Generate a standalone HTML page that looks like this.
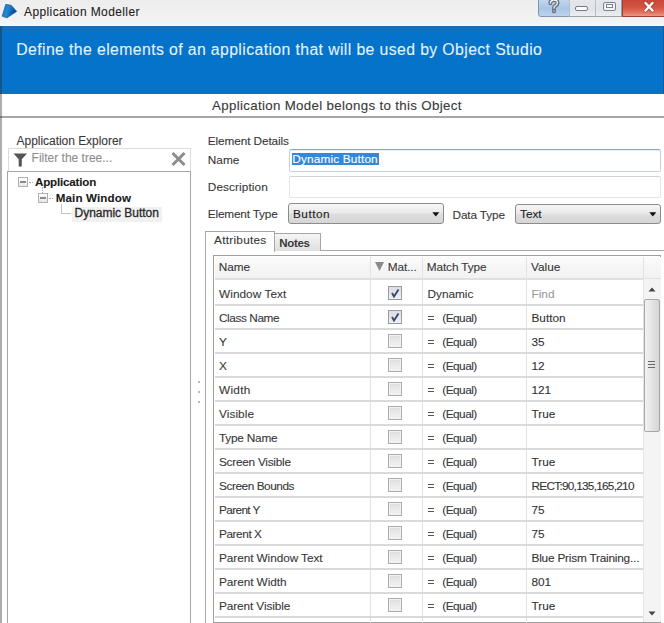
<!DOCTYPE html>
<html><head><meta charset="utf-8">
<style>
*{margin:0;padding:0;box-sizing:border-box}
html,body{width:664px;height:623px;overflow:hidden;background:#fff}
body{position:relative;font-family:"Liberation Sans",sans-serif;font-size:11.8px;color:#333}
.a{position:absolute}
.t{position:absolute;white-space:nowrap;line-height:1;font-family:"Liberation Sans",sans-serif;-webkit-text-stroke:0.1px currentColor}
</style></head><body>
<div class="a" style="left:0;top:0;width:664px;height:26px;background:linear-gradient(#ededed,#f1f1f1 60%,#f3f3f3 86%,#eef7ff 92%,#f4faff)"></div>
<svg class="a" style="left:0;top:0" width="20" height="22" viewBox="0 0 20 22"><defs><linearGradient id="ig" x1="0" y1="0" x2="1" y2="0.3"><stop offset="0" stop-color="#1a6fc0"/><stop offset="0.45" stop-color="#1f8ad8"/><stop offset="1" stop-color="#0b3f86"/></linearGradient></defs><path d="M5.8 4.4 L11.2 5.3 L16.6 11.4 L7 17.8 L2.2 16.2 Z" fill="url(#ig)" stroke="#1a5fa8" stroke-width="0.8" stroke-linejoin="round"/></svg>
<div class="a" style="left:537.5px;top:-2px;width:32.5px;height:18.5px;border:1px solid #8096ae;border-radius:0 0 0 3px;background:linear-gradient(#c4d8ee,#a9c6e6 55%,#bcd3ec)"></div>
<svg class="a" style="left:546px;top:-1px" width="16" height="16" viewBox="0 0 16 16"><path d="M4.3 4.2 Q4.6 1 8 1 Q11.6 1 11.4 4 Q11.2 6 8.8 7.2 Q8 7.7 8 9.2" stroke="#66707b" stroke-width="4" fill="none" stroke-linecap="round"/><circle cx="8" cy="12" r="2.2" fill="#66707b"/><path d="M4.3 4.2 Q4.6 1 8 1 Q11.6 1 11.4 4 Q11.2 6 8.8 7.2 Q8 7.7 8 9.2" stroke="#f4f7fb" stroke-width="1.3" fill="none" stroke-linecap="round"/><circle cx="8" cy="12" r="0.7" fill="#f4f7fb"/></svg>
<div class="a" style="left:569px;top:-2px;width:27px;height:18.5px;border:1px solid #98a2ad;border-left:1px solid #b8bec6;background:linear-gradient(#e6e8ec,#dfe2e7 55%,#eceef1)"></div>
<div class="a" style="left:574.5px;top:6.3px;width:13px;height:5px;border:1.4px solid #747c85;border-radius:2px;background:#fbfbfb"></div>
<div class="a" style="left:595px;top:-2px;width:27px;height:18.5px;border:1px solid #98a2ad;border-left:1px solid #b8bec6;background:linear-gradient(#e6e8ec,#dfe2e7 55%,#eceef1)"></div>
<div class="a" style="left:602.5px;top:1.5px;width:13px;height:9px;border:1.5px solid #7a838c;border-radius:2px;background:#f4f4f4"></div>
<div class="a" style="left:605.5px;top:4px;width:7px;height:4px;border:1px solid #7a838c;background:#fff"></div>
<div class="a" style="left:622px;top:-2px;width:44px;height:18.5px;border:1px solid #9c4036;background:linear-gradient(#c8473a,#d4513f 45%,#e2745f 80%,#e99a88)"></div>
<svg class="a" style="left:642px;top:1px" width="14" height="12" viewBox="0 0 14 12"><path d="M3.5 2 L10.5 9.5 M10.5 2 L3.5 9.5" stroke="#8a3a30" stroke-width="4" stroke-linecap="round" opacity="0.6"/><path d="M3.5 2 L10.5 9.5 M10.5 2 L3.5 9.5" stroke="#fff" stroke-width="2.4" stroke-linecap="round"/></svg>
<div class="a" style="left:0;top:26px;width:664px;height:67.5px;background:linear-gradient(#2a6aa6,#1a6cbc 1.5px,#0673cb 3px,#0673cb)"></div>
<div class="a" style="left:0;top:116.3px;width:664px;height:1.8px;background:#a6a6a6"></div>
<div class="a" style="left:0;top:26px;width:1.8px;height:597px;background:rgba(40,40,40,0.38)"></div>
<div class="a" style="left:662.5px;top:26px;width:1.5px;height:67.5px;background:rgba(0,30,60,0.25)"></div>
<div class="a" style="left:8px;top:148px;width:183px;height:24px;border:1px solid #dcdcdc;border-bottom:none"></div>
<svg class="a" style="left:12.5px;top:152.5px" width="15" height="14" viewBox="0 0 15 14"><path d="M0.5 0.5 H14 L8.8 6.2 V13.3 Q7.25 14 5.7 13.3 V6.2 Z" fill="#555"/></svg>
<svg class="a" style="left:170px;top:151px" width="17" height="16" viewBox="0 0 17 16"><path d="M2.5 2 L14.5 14 M14.5 2 L2.5 14" stroke="#8c8c8c" stroke-width="3"/></svg>
<div class="a" style="left:7.3px;top:171px;width:184px;height:460px;border:1.5px solid #a6a6a6"></div>
<div class="a" style="left:18px;top:177px;width:10px;height:10px;border:1px solid #b0b0b0;background:linear-gradient(#fff,#e8e8e8)"></div>
<div class="a" style="left:20px;top:181.3px;width:6px;height:1.4px;background:#8a8a8a"></div>
<div class="a" style="left:29px;top:181.5px;width:4px;border-top:1px dotted #aaa"></div>
<div class="a" style="left:42px;top:187px;height:6px;border-left:1px dotted #aaa"></div>
<div class="a" style="left:38px;top:193px;width:10px;height:10px;border:1px solid #b0b0b0;background:linear-gradient(#fff,#e8e8e8)"></div>
<div class="a" style="left:40px;top:197.3px;width:6px;height:1.4px;background:#8a8a8a"></div>
<div class="a" style="left:49px;top:197.5px;width:4px;border-top:1px dotted #aaa"></div>
<div class="a" style="left:61px;top:204px;width:10px;height:10px;border-left:1px solid #c4c4c4;border-bottom:1px solid #c4c4c4"></div>
<div class="a" style="left:71.5px;top:206.5px;width:90px;height:15px;background:#f1f1f1"></div>
<div class="a" style="left:198px;top:381px;width:2px;height:2px;border-radius:1px;background:#a4a4a4"></div>
<div class="a" style="left:198px;top:391px;width:2px;height:2px;border-radius:1px;background:#a4a4a4"></div>
<div class="a" style="left:198px;top:401px;width:2px;height:2px;border-radius:1px;background:#a4a4a4"></div>
<div class="a" style="left:289px;top:149px;width:372px;height:23px;border:1px solid #c4d2dc;border-top-color:#94a6b2;border-radius:2px;background:#fff;box-shadow:inset 0 1px 0 #e2f1f8"></div>
<div class="a" style="left:291.5px;top:152.5px;width:87px;height:12.5px;background:#3189dc"></div>
<div class="a" style="left:289px;top:176px;width:371.5px;height:22px;border:1px solid #e2e4e6;border-top-color:#d0d3d6;border-radius:2px;background:#fff"></div>
<div class="a" style="left:288px;top:203px;width:156px;height:21px;border:1px solid #8c8c8c;border-radius:3px;background:linear-gradient(#f6f6f6,#e9e9e9 45%,#dddddd 55%,#d6d6d6)"></div>
<svg class="a" style="left:432px;top:212px" width="8" height="5" viewBox="0 0 8 5"><path d="M0.3 0.3 H7.3 L3.8 4.5Z" fill="#111"/></svg>
<div class="a" style="left:515px;top:203.5px;width:146px;height:20.5px;border:1px solid #8c8c8c;border-radius:3px;background:linear-gradient(#f6f6f6,#e9e9e9 45%,#dddddd 55%,#d6d6d6)"></div>
<svg class="a" style="left:649px;top:212.2px" width="8" height="5" viewBox="0 0 8 5"><path d="M0.3 0.3 H7.3 L3.8 4.5Z" fill="#111"/></svg>
<div class="a" style="left:205px;top:250px;width:470px;height:400px;border:1.5px solid #a6a6a6"></div>
<div class="a" style="left:274px;top:233px;width:47px;height:18px;border:1px solid #a6a6a6;border-bottom:none;background:linear-gradient(#f6f6f6,#dedede)"></div>
<div class="a" style="left:205px;top:231px;width:70px;height:21px;border:1.5px solid #a6a6a6;border-bottom:none;background:#fff"></div>
<div class="a" style="left:213px;top:255px;width:448px;height:368px;border:1.5px solid #a0a0a0;background:#fff"></div>
<div class="a" style="left:214.5px;top:256.5px;width:446px;height:22.5px;background:linear-gradient(#fbfbfb,#f1f1f1)"></div>
<div class="a" style="left:214.5px;top:278px;width:446px;height:2px;background:#e0e0e0"></div>
<svg class="a" style="left:374.5px;top:262px" width="9" height="9" viewBox="0 0 9 9"><path d="M0 0 H9 L4.5 9Z" fill="#8a8a8a"/></svg>
<div class="a" style="left:370px;top:256.5px;width:1px;height:366px;background:#e2e2e2"></div>
<div class="a" style="left:421.5px;top:256.5px;width:1px;height:366px;background:#e2e2e2"></div>
<div class="a" style="left:526px;top:256.5px;width:1px;height:366px;background:#e2e2e2"></div>
<div class="a" style="left:643px;top:256.5px;width:1px;height:22px;background:#e2e2e2"></div>
<div class="a" style="left:214.5px;top:303.8px;width:429px;height:2px;background:#dadada"></div>
<div class="a" style="left:214.5px;top:327.8px;width:429px;height:2px;background:#dadada"></div>
<div class="a" style="left:214.5px;top:351.8px;width:429px;height:2px;background:#dadada"></div>
<div class="a" style="left:214.5px;top:375.8px;width:429px;height:2px;background:#dadada"></div>
<div class="a" style="left:214.5px;top:399.8px;width:429px;height:2px;background:#dadada"></div>
<div class="a" style="left:214.5px;top:423.8px;width:429px;height:2px;background:#dadada"></div>
<div class="a" style="left:214.5px;top:447.8px;width:429px;height:2px;background:#dadada"></div>
<div class="a" style="left:214.5px;top:471.8px;width:429px;height:2px;background:#dadada"></div>
<div class="a" style="left:214.5px;top:495.8px;width:429px;height:2px;background:#dadada"></div>
<div class="a" style="left:214.5px;top:519.8px;width:429px;height:2px;background:#dadada"></div>
<div class="a" style="left:214.5px;top:543.8px;width:429px;height:2px;background:#dadada"></div>
<div class="a" style="left:214.5px;top:567.8px;width:429px;height:2px;background:#dadada"></div>
<div class="a" style="left:214.5px;top:591.8px;width:429px;height:2px;background:#dadada"></div>
<div class="a" style="left:214.5px;top:615.8px;width:429px;height:2px;background:#dadada"></div>
<div class="a" style="left:388px;top:286px;width:14px;height:14px;border:1px solid #9c9c9c;background:linear-gradient(#dadde4,#eef0f4)"></div>
<svg class="a" style="left:388px;top:286px" width="14" height="14" viewBox="0 0 14 14"><path d="M4 7 L6 10.5 L10.5 3.5" stroke="#34446e" stroke-width="1.8" fill="none"/></svg>
<div class="a" style="left:388px;top:310px;width:14px;height:14px;border:1px solid #9c9c9c;background:linear-gradient(#dadde4,#eef0f4)"></div>
<svg class="a" style="left:388px;top:310px" width="14" height="14" viewBox="0 0 14 14"><path d="M4 7 L6 10.5 L10.5 3.5" stroke="#34446e" stroke-width="1.8" fill="none"/></svg>
<div class="a" style="left:428px;top:316.0px;width:5.5px;height:1.4px;background:#555"></div>
<div class="a" style="left:428px;top:318.6px;width:5.5px;height:1.4px;background:#555"></div>
<div class="a" style="left:388px;top:334px;width:14px;height:14px;border:1px solid #adadad;background:linear-gradient(#dedede,#f4f4f4);box-shadow:inset 0 0 0 1px #f2f2f2"></div>
<div class="a" style="left:428px;top:340.0px;width:5.5px;height:1.4px;background:#555"></div>
<div class="a" style="left:428px;top:342.6px;width:5.5px;height:1.4px;background:#555"></div>
<div class="a" style="left:388px;top:358px;width:14px;height:14px;border:1px solid #adadad;background:linear-gradient(#dedede,#f4f4f4);box-shadow:inset 0 0 0 1px #f2f2f2"></div>
<div class="a" style="left:428px;top:364.0px;width:5.5px;height:1.4px;background:#555"></div>
<div class="a" style="left:428px;top:366.6px;width:5.5px;height:1.4px;background:#555"></div>
<div class="a" style="left:388px;top:382px;width:14px;height:14px;border:1px solid #adadad;background:linear-gradient(#dedede,#f4f4f4);box-shadow:inset 0 0 0 1px #f2f2f2"></div>
<div class="a" style="left:428px;top:388.0px;width:5.5px;height:1.4px;background:#555"></div>
<div class="a" style="left:428px;top:390.6px;width:5.5px;height:1.4px;background:#555"></div>
<div class="a" style="left:388px;top:406px;width:14px;height:14px;border:1px solid #adadad;background:linear-gradient(#dedede,#f4f4f4);box-shadow:inset 0 0 0 1px #f2f2f2"></div>
<div class="a" style="left:428px;top:412.0px;width:5.5px;height:1.4px;background:#555"></div>
<div class="a" style="left:428px;top:414.6px;width:5.5px;height:1.4px;background:#555"></div>
<div class="a" style="left:388px;top:430px;width:14px;height:14px;border:1px solid #adadad;background:linear-gradient(#dedede,#f4f4f4);box-shadow:inset 0 0 0 1px #f2f2f2"></div>
<div class="a" style="left:428px;top:436.0px;width:5.5px;height:1.4px;background:#555"></div>
<div class="a" style="left:428px;top:438.6px;width:5.5px;height:1.4px;background:#555"></div>
<div class="a" style="left:388px;top:454px;width:14px;height:14px;border:1px solid #adadad;background:linear-gradient(#dedede,#f4f4f4);box-shadow:inset 0 0 0 1px #f2f2f2"></div>
<div class="a" style="left:428px;top:460.0px;width:5.5px;height:1.4px;background:#555"></div>
<div class="a" style="left:428px;top:462.6px;width:5.5px;height:1.4px;background:#555"></div>
<div class="a" style="left:388px;top:478px;width:14px;height:14px;border:1px solid #adadad;background:linear-gradient(#dedede,#f4f4f4);box-shadow:inset 0 0 0 1px #f2f2f2"></div>
<div class="a" style="left:428px;top:484.0px;width:5.5px;height:1.4px;background:#555"></div>
<div class="a" style="left:428px;top:486.6px;width:5.5px;height:1.4px;background:#555"></div>
<div class="a" style="left:388px;top:502px;width:14px;height:14px;border:1px solid #adadad;background:linear-gradient(#dedede,#f4f4f4);box-shadow:inset 0 0 0 1px #f2f2f2"></div>
<div class="a" style="left:428px;top:508.0px;width:5.5px;height:1.4px;background:#555"></div>
<div class="a" style="left:428px;top:510.6px;width:5.5px;height:1.4px;background:#555"></div>
<div class="a" style="left:388px;top:526px;width:14px;height:14px;border:1px solid #adadad;background:linear-gradient(#dedede,#f4f4f4);box-shadow:inset 0 0 0 1px #f2f2f2"></div>
<div class="a" style="left:428px;top:532.0px;width:5.5px;height:1.4px;background:#555"></div>
<div class="a" style="left:428px;top:534.6px;width:5.5px;height:1.4px;background:#555"></div>
<div class="a" style="left:388px;top:550px;width:14px;height:14px;border:1px solid #adadad;background:linear-gradient(#dedede,#f4f4f4);box-shadow:inset 0 0 0 1px #f2f2f2"></div>
<div class="a" style="left:428px;top:556.0px;width:5.5px;height:1.4px;background:#555"></div>
<div class="a" style="left:428px;top:558.6px;width:5.5px;height:1.4px;background:#555"></div>
<div class="a" style="left:388px;top:574px;width:14px;height:14px;border:1px solid #adadad;background:linear-gradient(#dedede,#f4f4f4);box-shadow:inset 0 0 0 1px #f2f2f2"></div>
<div class="a" style="left:428px;top:580.0px;width:5.5px;height:1.4px;background:#555"></div>
<div class="a" style="left:428px;top:582.6px;width:5.5px;height:1.4px;background:#555"></div>
<div class="a" style="left:388px;top:598px;width:14px;height:14px;border:1px solid #adadad;background:linear-gradient(#dedede,#f4f4f4);box-shadow:inset 0 0 0 1px #f2f2f2"></div>
<div class="a" style="left:428px;top:604.0px;width:5.5px;height:1.4px;background:#555"></div>
<div class="a" style="left:428px;top:606.6px;width:5.5px;height:1.4px;background:#555"></div>
<div class="a" style="left:643px;top:279px;width:17.5px;height:343px;background:#f4f4f4;border-left:1px solid #e4e4e4"></div>
<svg class="a" style="left:648px;top:287px" width="8" height="5" viewBox="0 0 8 5"><path d="M0.5 4.5 L4 0.5 L7.5 4.5Z" fill="#444"/></svg>
<div class="a" style="left:644px;top:299px;width:16px;height:133px;border:1px solid #a8a8a8;border-radius:2px;background:linear-gradient(90deg,#f2f2f2,#e4e4e4 50%,#d4d4d4)"></div>
<div class="a" style="left:648px;top:361px;width:7px;height:1px;background:#6a6a6a"></div>
<div class="a" style="left:648px;top:364px;width:7px;height:1px;background:#6a6a6a"></div>
<div class="a" style="left:648px;top:367px;width:7px;height:1px;background:#6a6a6a"></div>
<svg class="a" style="left:648px;top:611px" width="8" height="5" viewBox="0 0 8 5"><path d="M0.5 0.5 L7.5 0.5 L4 4.5Z" fill="#444"/></svg>
<div class="t" style="left:24px;top:5.84px;font-size:12px;color:#1e1e1e;letter-spacing:0.39px;">Application Modeller</div>
<div class="t" style="left:16.3px;top:42.03px;font-size:15.8px;color:#e3f2ff;letter-spacing:0.39px;">Define the elements of an application that will be used by Object Studio</div>
<div class="t" style="left:212px;top:98.94px;font-size:13.3px;color:#383838;letter-spacing:0.33px;">Application Model belongs to this Object</div>
<div class="t" style="left:16.6px;top:135.04px;font-size:12px;color:#3a3a3a;letter-spacing:-0.04px;">Application Explorer</div>
<div class="t" style="left:31.6px;top:152.14px;font-size:12px;color:#8e8e8e;">Filter the tree...</div>
<div class="t" style="left:35px;top:176.18px;font-size:11.6px;color:#1a1a1a;font-weight:700;letter-spacing:-0.18px;">Application</div>
<div class="t" style="left:55.7px;top:191.98px;font-size:11.6px;color:#1a1a1a;font-weight:700;letter-spacing:0.13px;">Main Window</div>
<div class="t" style="left:74.5px;top:207.34px;font-size:12px;color:#2a2a2a;letter-spacing:-0.02px;-webkit-text-stroke:0.3px #2a2a2a;">Dynamic Button</div>
<div class="t" style="left:207.8px;top:136.21px;font-size:11.8px;color:#383838;letter-spacing:-0.10px;">Element Details</div>
<div class="t" style="left:207.8px;top:155.01px;font-size:11.8px;color:#383838;">Name</div>
<div class="t" style="left:207.8px;top:182.31px;font-size:11.8px;color:#383838;letter-spacing:0.10px;">Description</div>
<div class="t" style="left:207.8px;top:209.31px;font-size:11.8px;color:#383838;letter-spacing:-0.18px;">Element Type</div>
<div class="t" style="left:292.2px;top:154.01px;font-size:11.8px;color:#fff;letter-spacing:0.17px;">Dynamic Button</div>
<div class="t" style="left:293px;top:208.71px;font-size:11.8px;color:#222;letter-spacing:0.48px;">Button</div>
<div class="t" style="left:452.5px;top:209.51px;font-size:11.8px;color:#383838;letter-spacing:-0.13px;">Data Type</div>
<div class="t" style="left:520px;top:208.71px;font-size:11.8px;color:#222;">Text</div>
<div class="t" style="left:279.3px;top:237.77px;font-size:11.5px;color:#3a3a3a;font-weight:700;letter-spacing:-0.31px;-webkit-text-stroke:0px;">Notes</div>
<div class="t" style="left:214px;top:235.41px;font-size:11.8px;color:#383838;letter-spacing:0.27px;">Attributes</div>
<div class="t" style="left:218.7px;top:262.41px;font-size:11.8px;color:#383838;">Name</div>
<div class="t" style="left:387.8px;top:262.41px;font-size:11.8px;color:#383838;letter-spacing:-0.10px;">Mat...</div>
<div class="t" style="left:426.7px;top:262.41px;font-size:11.8px;color:#383838;letter-spacing:-0.09px;">Match Type</div>
<div class="t" style="left:531px;top:262.41px;font-size:11.8px;color:#383838;">Value</div>
<div class="t" style="left:219px;top:288.51px;font-size:11.8px;color:#383838;letter-spacing:0.06px;">Window Text</div>
<div class="t" style="left:427.5px;top:288.51px;font-size:11.8px;color:#383838;">Dynamic</div>
<div class="t" style="left:531.5px;top:288.51px;font-size:11.8px;color:#9a9a9a;">Find</div>
<div class="t" style="left:219px;top:312.81px;font-size:11.8px;color:#383838;letter-spacing:-0.41px;">Class Name</div>
<div class="t" style="left:442.3px;top:312.81px;font-size:11.8px;color:#383838;letter-spacing:-0.51px;">(Equal)</div>
<div class="t" style="left:531.5px;top:312.81px;font-size:11.8px;color:#333;">Button</div>
<div class="t" style="left:219px;top:336.81px;font-size:11.8px;color:#383838;">Y</div>
<div class="t" style="left:442.3px;top:336.81px;font-size:11.8px;color:#383838;letter-spacing:-0.51px;">(Equal)</div>
<div class="t" style="left:531.5px;top:336.81px;font-size:11.8px;color:#333;">35</div>
<div class="t" style="left:219px;top:360.81px;font-size:11.8px;color:#383838;">X</div>
<div class="t" style="left:442.3px;top:360.81px;font-size:11.8px;color:#383838;letter-spacing:-0.51px;">(Equal)</div>
<div class="t" style="left:531.5px;top:360.81px;font-size:11.8px;color:#333;">12</div>
<div class="t" style="left:219px;top:384.81px;font-size:11.8px;color:#383838;letter-spacing:0.29px;">Width</div>
<div class="t" style="left:442.3px;top:384.81px;font-size:11.8px;color:#383838;letter-spacing:-0.51px;">(Equal)</div>
<div class="t" style="left:531.5px;top:384.81px;font-size:11.8px;color:#333;">121</div>
<div class="t" style="left:219px;top:408.81px;font-size:11.8px;color:#383838;letter-spacing:0.08px;">Visible</div>
<div class="t" style="left:442.3px;top:408.81px;font-size:11.8px;color:#383838;letter-spacing:-0.51px;">(Equal)</div>
<div class="t" style="left:531.5px;top:408.81px;font-size:11.8px;color:#333;">True</div>
<div class="t" style="left:219px;top:432.81px;font-size:11.8px;color:#383838;letter-spacing:-0.22px;">Type Name</div>
<div class="t" style="left:442.3px;top:432.81px;font-size:11.8px;color:#383838;letter-spacing:-0.51px;">(Equal)</div>
<div class="t" style="left:219px;top:456.81px;font-size:11.8px;color:#383838;letter-spacing:-0.25px;">Screen Visible</div>
<div class="t" style="left:442.3px;top:456.81px;font-size:11.8px;color:#383838;letter-spacing:-0.51px;">(Equal)</div>
<div class="t" style="left:531.5px;top:456.81px;font-size:11.8px;color:#333;">True</div>
<div class="t" style="left:219px;top:480.81px;font-size:11.8px;color:#383838;letter-spacing:-0.43px;">Screen Bounds</div>
<div class="t" style="left:442.3px;top:480.81px;font-size:11.8px;color:#383838;letter-spacing:-0.51px;">(Equal)</div>
<div class="t" style="left:531.5px;top:480.81px;font-size:11.8px;color:#333;letter-spacing:-0.73px;">RECT:90,135,165,210</div>
<div class="t" style="left:219px;top:504.81px;font-size:11.8px;color:#383838;letter-spacing:-0.63px;">Parent Y</div>
<div class="t" style="left:442.3px;top:504.81px;font-size:11.8px;color:#383838;letter-spacing:-0.51px;">(Equal)</div>
<div class="t" style="left:531.5px;top:504.81px;font-size:11.8px;color:#333;">75</div>
<div class="t" style="left:219px;top:528.81px;font-size:11.8px;color:#383838;letter-spacing:-0.42px;">Parent X</div>
<div class="t" style="left:442.3px;top:528.81px;font-size:11.8px;color:#383838;letter-spacing:-0.51px;">(Equal)</div>
<div class="t" style="left:531.5px;top:528.81px;font-size:11.8px;color:#333;">75</div>
<div class="t" style="left:219px;top:552.81px;font-size:11.8px;color:#383838;letter-spacing:-0.07px;">Parent Window Text</div>
<div class="t" style="left:442.3px;top:552.81px;font-size:11.8px;color:#383838;letter-spacing:-0.51px;">(Equal)</div>
<div class="t" style="left:531.5px;top:552.81px;font-size:11.8px;color:#333;letter-spacing:-0.20px;">Blue Prism Training...</div>
<div class="t" style="left:219px;top:576.81px;font-size:11.8px;color:#383838;letter-spacing:-0.06px;">Parent Width</div>
<div class="t" style="left:442.3px;top:576.81px;font-size:11.8px;color:#383838;letter-spacing:-0.51px;">(Equal)</div>
<div class="t" style="left:531.5px;top:576.81px;font-size:11.8px;color:#333;">801</div>
<div class="t" style="left:219px;top:600.81px;font-size:11.8px;color:#383838;letter-spacing:-0.10px;">Parent Visible</div>
<div class="t" style="left:442.3px;top:600.81px;font-size:11.8px;color:#383838;letter-spacing:-0.51px;">(Equal)</div>
<div class="t" style="left:531.5px;top:600.81px;font-size:11.8px;color:#333;">True</div>
</body></html>
